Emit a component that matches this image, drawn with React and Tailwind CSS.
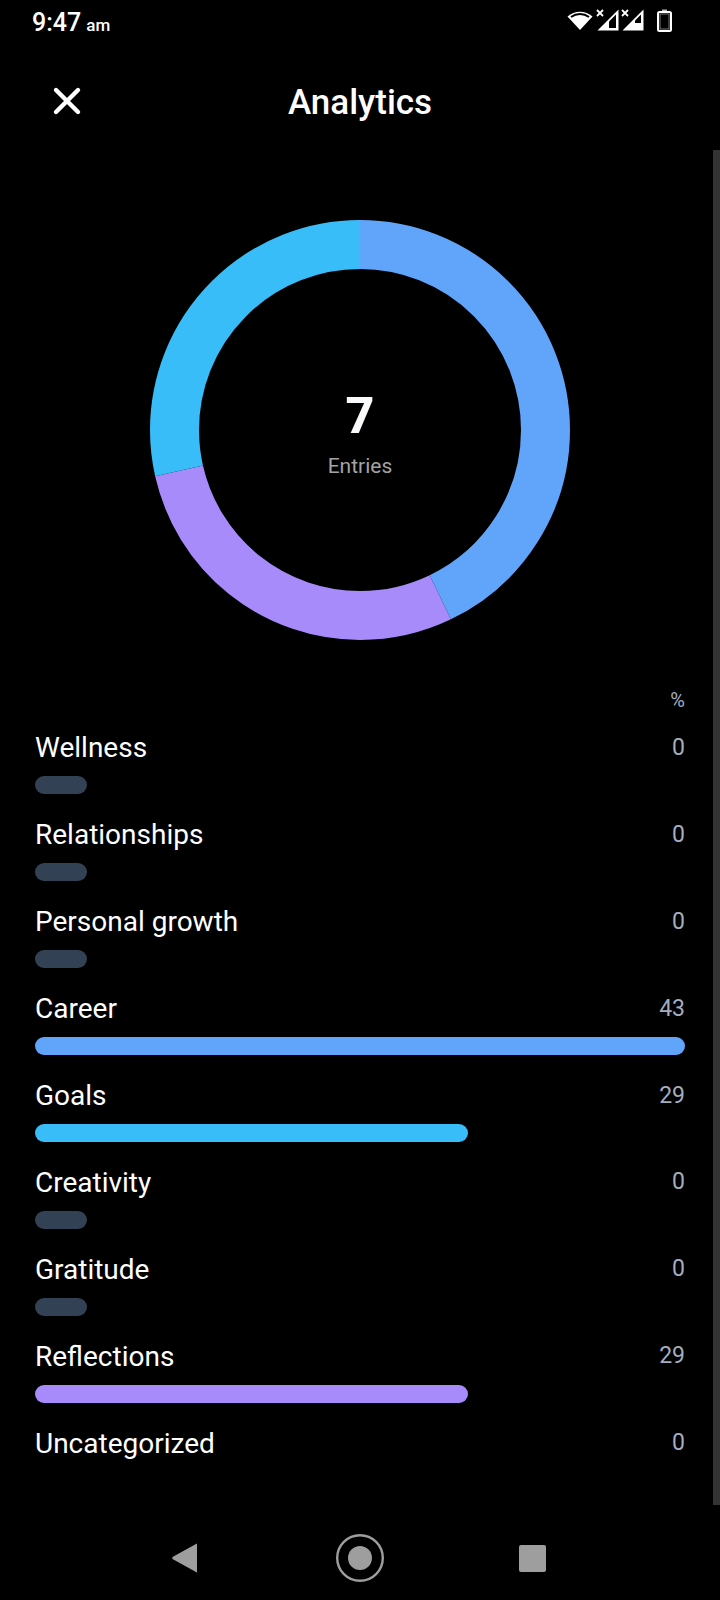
const rows = [
  { name: 'Wellness', value: 0 },
  { name: 'Relationships', value: 0 },
  { name: 'Personal growth', value: 0 },
  { name: 'Career', value: 43, bar: 'w-full bg-[#60a5fa]' },
  { name: 'Goals', value: 29, bar: 'w-[433px] bg-[#38bdf8]' },
  { name: 'Creativity', value: 0 },
  { name: 'Gratitude', value: 0 },
  { name: 'Reflections', value: 29, bar: 'w-[433px] bg-[#a78bfa]' },
  { name: 'Uncategorized', value: 0, noBar: true },
];

function Signal({ level }) {
  return (
    <svg width="24" height="22" viewBox="0 0 24 22">
      <path d="M22.5 0.5V21.5H1.5Z" fill="#fff" />
      <path d={level === 'low' ? 'M20 5.5V19H13V12.5Z' : 'M20 5.5V14H14V11.5Z'} fill="#000" />
      <path d="M1 1l6 6M7 1l-6 6" stroke="#fff" strokeWidth="1.8" />
    </svg>
  );
}

function StatusBar() {
  return (
    <div className="h-[44px] flex items-center justify-between pl-[32px] pr-[48px] text-white font-['Roboto',sans-serif]">
      <div className="flex items-baseline gap-[5px] mt-[2px] font-medium">
        <span className="text-[25px]">9:47</span>
        <span className="text-[17px]">am</span>
      </div>
      <div className="flex items-center mt-[-4px]">
        <svg width="26" height="20" viewBox="0 0 26 20">
          <path d="M0.5 6.5A19 19 0 0 1 25.5 6.5L13 20Z" fill="#fff" />
          <path d="M4 7A15 15 0 0 1 22 7" fill="none" stroke="#000" strokeWidth="2" />
        </svg>
        <div className="flex items-center gap-[1px] ml-[3px]">
          <Signal level="low" />
          <Signal level="high" />
        </div>
        <svg className="ml-[12px]" width="15" height="23" viewBox="0 0 15 23">
          <path d="M5 0.5h5v2h-5z" fill="#bbb" />
          <rect x="1" y="3" width="13" height="19" rx="1.5" fill="none" stroke="#fff" strokeWidth="2" />
          <rect x="3" y="5" width="9" height="15" fill="none" stroke="#777" strokeWidth="1" />
        </svg>
      </div>
    </div>
  );
}

function Donut() {
  // r = 185.5, circumference = 1165.5; segments 3/7, 2/7, 2/7
  return (
    <svg width="420" height="420" viewBox="0 0 420 420" className="-rotate-90">
      <circle cx="210" cy="210" r="185.5" fill="none" stroke="#60a5fa" strokeWidth="49" strokeDasharray="499.5 1165.5" />
      <circle cx="210" cy="210" r="185.5" fill="none" stroke="#a78bfa" strokeWidth="49" strokeDasharray="333 1165.5" strokeDashoffset="-499.5" />
      <circle cx="210" cy="210" r="185.5" fill="none" stroke="#38bdf8" strokeWidth="49" strokeDasharray="333 1165.5" strokeDashoffset="-832.5" />
    </svg>
  );
}

function NavBar() {
  return (
    <div className="h-[74px] flex items-center pl-[172px]">
      <svg width="25" height="30" viewBox="0 0 25 30">
        <path d="M25 1V29Q25 30 24 29L0.5 16Q0 15 0.5 14L24 1Q25 0 25 1Z" fill="#9e9e9e" />
      </svg>
      <svg className="ml-[139px]" width="48" height="48" viewBox="0 0 48 48">
        <circle cx="24" cy="24" r="22.8" fill="none" stroke="#9e9e9e" strokeWidth="2.4" />
        <circle cx="24" cy="24" r="12" fill="#9e9e9e" />
      </svg>
      <div className="ml-[135px] w-[27px] h-[27px] rounded-[2px] bg-[#9e9e9e]" />
    </div>
  );
}

export default function App() {
  return (
    <div className="relative w-[720px] h-[1600px] bg-black overflow-hidden flex flex-col font-['Roboto',sans-serif]">
      <StatusBar />

      {/* Header */}
      <div className="relative mt-[35px] h-[44px] flex items-center justify-center">
        <svg className="absolute left-[52px] top-[7px]" width="30" height="30" viewBox="0 0 30 30">
          <path d="M4 4L26 26M26 4L4 26" stroke="#fff" strokeWidth="4.4" strokeLinecap="round" />
        </svg>
        <h1 className="text-[35px] font-medium text-white mt-[4px]">Analytics</h1>
      </div>

      {/* Donut */}
      <div className="relative mt-[97px] self-center w-[420px] h-[420px]">
        <Donut />
        <div className="absolute inset-0 flex flex-col items-center justify-center">
          <div className="text-[50px] leading-[58px] font-extrabold text-[#f8fafc] mt-[6px]">7</div>
          <div className="text-[21px] leading-[28px] text-[#a3a3a3] mt-[7px]">Entries</div>
        </div>
      </div>

      {/* Percent list */}
      <div className="mt-[48px] pl-[35px] pr-[35px]">
        <div className="text-right text-[20px] leading-[24px] text-[#a3aebf]">%</div>
        <div className="mt-[17px]">
          {rows.map((row) => (
            <div key={row.name} className="h-[86.95px]">
              <div className="h-[38px] flex items-center justify-between">
                <span className="text-[28px] text-white">{row.name}</span>
                <span className="text-[23px] text-[#a3aebf]">{row.value}</span>
              </div>
              {row.noBar ? null : (
                <div className={`mt-[9px] h-[18px] rounded-full ${row.bar ? row.bar : 'w-[52px] bg-[#334155]'}`} />
              )}
            </div>
          ))}
        </div>
      </div>

      <div className="flex-1" />
      <NavBar />
      <div className="h-[5px]" />

      {/* Scrollbar */}
      <div className="absolute right-0 top-[150px] w-[7px] h-[1355px] bg-[#333333]" />
    </div>
  );
}
